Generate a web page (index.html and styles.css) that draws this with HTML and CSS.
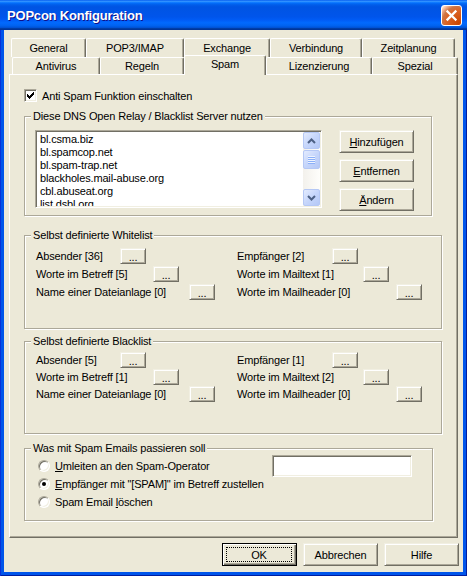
FILE: index.html
```html
<!DOCTYPE html>
<html lang="de">
<head>
<meta charset="utf-8">
<title>POPcon Konfiguration</title>
<link rel="stylesheet" href="styles.css">
</head>
<body>
<div class="window">
  <div class="titlebar">
    <span class="title">POPcon Konfiguration</span>
    <button class="close" aria-label="Schließen">
      <svg width="19" height="19" viewBox="0 0 19 19"><path d="M5.5 5.5 L13.5 13.5 M13.5 5.5 L5.5 13.5" stroke="#fff" stroke-width="2.3" stroke-linecap="square"/></svg>
    </button>
  </div>
  <div class="client">
    <div class="tab-row row1">
      <div class="tab tab-general">General</div>
      <div class="tab tab-pop">POP3/IMAP</div>
      <div class="tab tab-exchange">Exchange</div>
      <div class="tab tab-verbindung">Verbindung</div>
      <div class="tab tab-zeit">Zeitplanung</div>
    </div>
    <div class="tab-row row2">
      <div class="tab tab-antivirus">Antivirus</div>
      <div class="tab tab-regeln">Regeln</div>
      <div class="tab tab-spam active">Spam</div>
      <div class="tab tab-lizenz">Lizenzierung</div>
      <div class="tab tab-spezial">Spezial</div>
    </div>
    <div class="panel">
      <div class="check-row">
        <span class="checkbox"><svg width="11" height="11" viewBox="0 0 11 11" shape-rendering="crispEdges"><path d="M2 4h1v3h-1z M3 5h1v3h-1z M4 6h1v3h-1z M5 5h1v3h-1z M6 4h1v3h-1z M7 3h1v3h-1z M8 2h1v3h-1z" fill="#000"/></svg></span>
        <span>Anti Spam Funktion einschalten</span>
      </div>

      <div class="group group-dns">
        <div class="group-title">Diese DNS Open Relay / Blacklist Server nutzen</div>
        <div class="dns-body">
          <div class="listbox">
            <ul class="items">
              <li>bl.csma.biz</li>
              <li>bl.spamcop.net</li>
              <li>bl.spam-trap.net</li>
              <li>blackholes.mail-abuse.org</li>
              <li>cbl.abuseat.org</li>
              <li>list.dsbl.org</li>
            </ul>
            <div class="vscroll">
              <div class="sb-btn"><svg width="9" height="6" viewBox="0 0 9 6"><path d="M1 5 L4.5 1.5 L8 5" fill="none" stroke="#4D6185" stroke-width="2"/></svg></div>
              <div class="sb-thumb"><svg width="7" height="8" viewBox="0 0 7 8" shape-rendering="crispEdges"><path d="M0 0h7v1h-7z M0 2h7v1h-7z M0 4h7v1h-7z M0 6h7v1h-7z" fill="#EEF4FE"/><path d="M0 1h7v1h-7z M0 3h7v1h-7z M0 5h7v1h-7z M0 7h7v1h-7z" fill="#8CB0F8"/></svg></div>
              <div class="sb-track"></div>
              <div class="sb-btn"><svg width="9" height="6" viewBox="0 0 9 6"><path d="M1 1 L4.5 4.5 L8 1" fill="none" stroke="#4D6185" stroke-width="2"/></svg></div>
            </div>
          </div>
          <div class="side-buttons">
            <button class="btn"><u>H</u>inzufügen</button>
            <button class="btn"><u>E</u>ntfernen</button>
            <button class="btn"><u>Ä</u>ndern</button>
          </div>
        </div>
      </div>

      <div class="group group-white">
        <div class="group-title">Selbst definierte Whitelist</div>
        <div class="pairs">
          <div class="field"><span class="lbl w84">Absender [36]</span><button class="btn dots">...</button></div>
          <div class="field"><span class="lbl w95">Empfänger [2]</span><button class="btn dots">...</button></div>
          <div class="field"><span class="lbl w117">Worte im Betreff [5]</span><button class="btn dots">...</button></div>
          <div class="field"><span class="lbl w126">Worte im Mailtext [1]</span><button class="btn dots">...</button></div>
          <div class="field"><span class="lbl w153">Name einer Dateianlage [0]</span><button class="btn dots">...</button></div>
          <div class="field"><span class="lbl w159">Worte im Mailheader [0]</span><button class="btn dots">...</button></div>
        </div>
      </div>

      <div class="group group-black">
        <div class="group-title">Selbst definierte Blacklist</div>
        <div class="pairs pairs-black">
          <div class="field"><span class="lbl w84">Absender [5]</span><button class="btn dots">...</button></div>
          <div class="field"><span class="lbl w95">Empfänger [1]</span><button class="btn dots">...</button></div>
          <div class="field"><span class="lbl w117">Worte im Betreff [1]</span><button class="btn dots">...</button></div>
          <div class="field"><span class="lbl w126">Worte im Mailtext [2]</span><button class="btn dots">...</button></div>
          <div class="field"><span class="lbl w153">Name einer Dateianlage [0]</span><button class="btn dots">...</button></div>
          <div class="field"><span class="lbl w159">Worte im Mailheader [0]</span><button class="btn dots">...</button></div>
        </div>
      </div>

      <div class="group group-action">
        <div class="group-title">Was mit Spam Emails passieren soll</div>
        <div class="action-body">
          <div class="radios">
            <div class="radio-row"><span class="radio"></span><span><u>U</u>mleiten an den Spam-Operator</span></div>
            <div class="radio-row"><span class="radio on"></span><span><u>E</u>mpfänger mit "[SPAM]" im Betreff zustellen</span></div>
            <div class="radio-row"><span class="radio"></span><span>Spam Email <u>l</u>öschen</span></div>
          </div>
          <div class="textbox"></div>
        </div>
      </div>
    </div>
    <div class="dialog-buttons">
      <button class="btn default"><span class="focus">OK</span></button>
      <button class="btn">Abbrechen</button>
      <button class="btn">Hilfe</button>
    </div>
  </div>
</div>
</body>
</html>
```
FILE: styles.css
```css
* { box-sizing: border-box; }

html, body { margin: 0; padding: 0; }

body {
  font-family: "Liberation Sans", Arial, sans-serif;
  font-size: 11px;
  letter-spacing: -0.15px;
  color: #000;
  background: #fff;
}

.window {
  width: 467px;
  height: 576px;
  display: flex;
  flex-direction: column;
  background: #0055EA;
  box-shadow: inset 1px 0 #0831D9, inset -1px 0 #001EA0, inset 0 -1px #001EA0;
}

/* title bar */
.titlebar {
  height: 30px;
  flex: none;
  display: flex;
  align-items: center;
  padding: 0 5px 0 7px;
  background: linear-gradient(to bottom, #0058EE 0%, #3593FF 4%, #288EFF 6%, #127DFF 8%, #036FFC 10%, #0262EE 14%, #0057E5 20%, #0054E3 24%, #0055EB 56%, #005BF5 66%, #026AFE 76%, #0062EF 86%, #0052D6 92%, #0040AB 94%, #003092 100%);
}

.title {
  flex: 1;
  color: #fff;
  font-weight: bold;
  font-size: 13px;
  letter-spacing: -0.2px;
  text-shadow: 1px 1px #0F1089;
}

.close {
  width: 21px;
  height: 21px;
  padding: 0;
  border: 1px solid #fff;
  border-radius: 3px;
  background: radial-gradient(circle at 90% 90%, #CC4600 0%, #DC6527 55%, #CD7546 70%, #FFCCB2 90%, #fff 100%);
  display: flex;
  align-items: center;
  justify-content: center;
}

/* client area */
.client {
  flex: 1;
  margin: 0 4px 4px;
  background: #ECE9D8;
  padding-top: 8px;
  display: flex;
  flex-direction: column;
}

/* tabs */
.tab-row { display: flex; flex: none; }
.row1 { height: 19px; margin-left: 7px; }
.row2 { height: 17px; margin-left: 8px; }

.tab {
  display: flex;
  align-items: center;
  justify-content: center;
  background: #ECE9D8;
  border-top: 1px solid #fff;
  border-left: 1px solid #fff;
  border-right: 1px solid #716F64;
  box-shadow: inset -1px 0 #ACA899;
  border-radius: 2px 2px 0 0;
  white-space: nowrap;
}

.tab.active {
  position: relative;
  z-index: 1;
  height: 20px;
  margin-top: -2px;
  padding-bottom: 3px;
}

.tab-general { width: 75px; }
.tab-pop { width: 98px; }
.tab-exchange { width: 86px; }
.tab-verbindung { width: 92px; }
.tab-zeit { width: 93px; }
.tab-antivirus { width: 88px; }
.tab-regeln { width: 84px; }
.tab-spam { width: 82px; }
.tab-lizenz { width: 106px; }
.tab-spezial { width: 86px; }

/* panel */
.panel {
  flex: none;
  margin-left: 5px;
  width: 449px;
  height: 464px;
  border: 1px solid;
  border-color: #fff #716F64 #716F64 #fff;
  box-shadow: inset -1px -1px #ACA899;
  padding: 14px 0 0 14px;
}

.check-row {
  display: flex;
  align-items: center;
  height: 13px;
}

.checkbox {
  flex: none;
  width: 13px;
  height: 13px;
  background: #fff;
  border: 1px solid;
  border-color: #ACA899 #fff #fff #ACA899;
  box-shadow: inset 1px 1px #716F64, inset -1px -1px #F1EFE2;
  margin-right: 5px;
  display: flex;
}

/* group boxes */
.group {
  border: 1px solid #ACA899;
  box-shadow: inset 1px 1px #fff, 1px 1px #fff;
}

.group-title {
  width: fit-content;
  margin: -7px 0 -6px 6px;
  padding: 0 2px;
  line-height: 13px;
  background: #ECE9D8;
  white-space: nowrap;
}

.group-dns { margin-top: 14px; width: 408px; height: 100px; }
.group-white { margin-top: 19px; width: 418px; height: 94px; }
.group-black { margin-top: 12px; width: 418px; height: 93px; }
.group-action { margin-top: 14px; width: 409px; height: 73px; }

.dns-body {
  display: flex;
  align-items: flex-start;
  padding: 13px 0 0 10px;
}

.listbox {
  flex: none;
  width: 287px;
  height: 78px;
  display: flex;
  background: #fff;
  border: 1px solid;
  border-color: #ACA899 #fff #fff #ACA899;
  box-shadow: inset 1px 1px #716F64, inset -1px -1px #F1EFE2;
  padding: 1px;
}

.items {
  flex: 1;
  list-style: none;
  margin: 0;
  padding: 1px 3px 0;
  overflow: hidden;
  line-height: 13px;
  white-space: nowrap;
}

.vscroll {
  flex: none;
  width: 17px;
  display: flex;
  flex-direction: column;
  background: linear-gradient(to right, #F3F1EC, #FEFEFB);
}

.sb-btn, .sb-thumb {
  flex: none;
  display: flex;
  align-items: center;
  justify-content: center;
  border: 1px solid #B5C8F5;
  border-radius: 2px;
  background: linear-gradient(135deg, #E3EBFE 0%, #C6D6FB 50%, #B4C8F6 100%);
}

.sb-btn { height: 17px; }
.sb-thumb { height: 19px; margin-top: 1px; }
.sb-track { flex: 1; }

.side-buttons {
  display: flex;
  flex-direction: column;
  gap: 6px;
  margin-left: 17px;
}

/* buttons */
.btn {
  width: 75px;
  height: 23px;
  padding: 0;
  font: inherit;
  letter-spacing: inherit;
  color: #000;
  background: #ECE9D8;
  border: 1px solid;
  border-color: #F1EFE2 #716F64 #716F64 #F1EFE2;
  box-shadow: inset 1px 1px #fff, inset -1px -1px #ACA899;
}

.btn.dots {
  width: 26px;
  height: 16px;
  flex: none;
  line-height: 12px;
  padding-top: 2px;
}

.btn.default {
  border: 1px solid #000;
  box-shadow: inset 1px 1px #fff, inset -1px -1px #716F64, inset -2px -2px #ACA899;
  display: flex;
  padding: 3px 4px 3px 3px;
}

.focus {
  flex: 1;
  display: flex;
  align-items: center;
  justify-content: center;
  border: 1px dotted #000;
}

/* label/button pairs */
.pairs {
  display: grid;
  grid-template-columns: 201px auto;
  grid-auto-rows: 17px;
  row-gap: 1px;
  padding: 11px 0 0 11px;
}

.pairs-black {
  padding-top: 10px;
  grid-auto-rows: 16px;
}

.field {
  display: flex;
  align-items: center;
}

.lbl { flex: none; white-space: nowrap; }
.w84 { width: 84px; }
.w95 { width: 95px; }
.w117 { width: 117px; }
.w126 { width: 126px; }
.w153 { width: 153px; }
.w159 { width: 159px; }

/* action group */
.action-body {
  display: flex;
  align-items: flex-start;
  padding: 8px 0 0 13px;
}

.radios { display: flex; flex-direction: column; }

.radio-row {
  height: 18px;
  display: flex;
  align-items: center;
  white-space: nowrap;
}

.radio {
  flex: none;
  width: 12px;
  height: 12px;
  border-radius: 50%;
  background: #fff;
  border: 1px solid;
  border-color: #ACA899 #fff #fff #ACA899;
  box-shadow: inset 1px 1px #716F64, inset -1px -1px #F1EFE2;
  margin-right: 5px;
  display: flex;
  align-items: center;
  justify-content: center;
}

.radio.on::after {
  content: "";
  width: 4px;
  height: 4px;
  border-radius: 50%;
  background: #000;
}

.textbox {
  flex: none;
  width: 140px;
  height: 22px;
  margin: -2px 20px 0 auto;
  background: #fff;
  border: 1px solid;
  border-color: #ACA899 #fff #fff #ACA899;
  box-shadow: inset 1px 1px #716F64, inset -1px -1px #F1EFE2;
}

/* dialog buttons */
.dialog-buttons {
  display: flex;
  justify-content: flex-end;
  gap: 6px;
  margin-top: 5px;
  padding-right: 4px;
}
```
